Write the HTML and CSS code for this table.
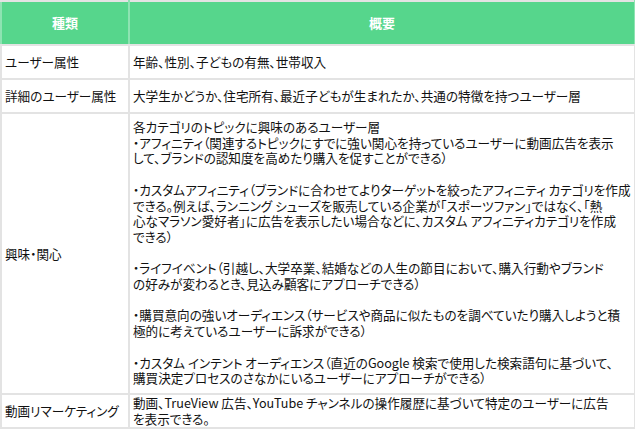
FILE: index.html
```html
<!DOCTYPE html>
<html lang="ja">
<head>
<meta charset="utf-8">
<link rel="stylesheet" href="styles.css">
</head>
<body>
<table class="tbl">
  <colgroup><col class="c1"><col class="c2"></colgroup>
  <thead>
    <tr class="r-head"><th>種類</th><th>概要</th></tr>
  </thead>
  <tbody>
    <tr class="r-1"><td class="k">ユーザー属性</td><td class="v">年齢、性別、子どもの有無、世帯収入</td></tr>
    <tr class="r-1"><td class="k">詳細のユーザー属性</td><td class="v">大学生かどうか、住宅所有、最近子どもが生まれたか、共通の特徴を持つユーザー層</td></tr>
    <tr class="r-big"><td class="k">興味・関心</td><td class="v big">各カテゴリのトピックに興味のあるユーザー層<br>・アフィニティ（関連するトピックにすでに強い関心を持っているユーザーに動画広告を表示<br>して、ブランドの認知度を高めたり購入を促すことができる）<br><br>・カスタムアフィニティ（ブランドに合わせてよりターゲットを絞ったアフィニティ カテゴリを作成<br>できる。例えば、ランニング シューズを販売している企業が「スポーツファン」ではなく、「熱<br>心なマラソン愛好者」に広告を表示したい場合などに、カスタム アフィニティカテゴリを作成<br>できる）<br><br>・ライフイベント（引越し、大学卒業、結婚などの人生の節目において、購入行動やブランド<br>の好みが変わるとき、見込み顧客にアプローチできる）<br><br>・購買意向の強いオーディエンス（サービスや商品に似たものを調べていたり購入しようと積<br>極的に考えているユーザーに訴求ができる）<br><br>・カスタム インテント オーディエンス（直近のGoogle 検索で使用した検索語句に基づいて、<br>購買決定プロセスのさなかにいるユーザーにアプローチができる）</td></tr>
    <tr class="r-4"><td class="k">動画リマーケティング</td><td class="v">動画、TrueView 広告、YouTube チャンネルの操作履歴に基づいて特定のユーザーに広告<br>を表示できる。</td></tr>
  </tbody>
</table>
</body>
</html>
```
FILE: styles.css
```css
html, body {
  margin: 0;
  padding: 0;
  background: #ffffff;
}
body {
  font-family: "Noto Sans CJK JP", "Noto Sans", sans-serif;
  font-feature-settings: "palt";
  color: #111111;
}
.tbl {
  border-collapse: collapse;
  width: 634px;
  table-layout: fixed;
  font-size: 12.6px;
  line-height: 15.7px;
}
.c1 { width: 128px; }
.c2 { width: 506px; }
.tbl th, .tbl td {
  border: 2px solid #e3e3e3;
  vertical-align: middle;
  text-align: left;
  white-space: nowrap;
}
.r-head th {
  height: 40px;
  background: #56d68c;
  color: #ffffff;
  font-weight: bold;
  text-align: center;
  font-size: 13px;
  border-color: #e3e3e3 #8ee3b2;
  border-top-color: #e3e3e3;
}
.r-1 td { height: 32px; }
.r-4 td { height: 32px; }
.k { padding: 0 3px; }
.v { padding: 0 3px; }
.v.big { padding: 5px 3px 7px; }
```
